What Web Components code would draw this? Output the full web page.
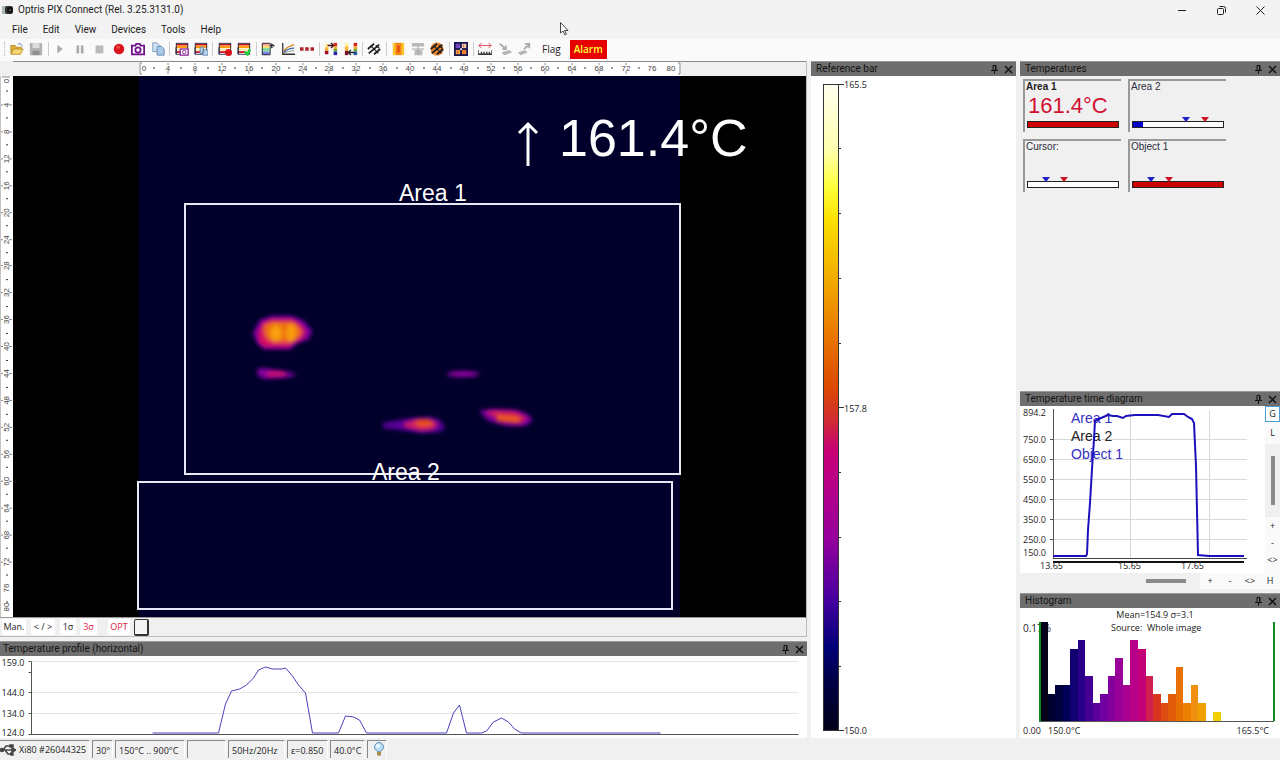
<!DOCTYPE html>
<html lang="en">
<head>
<meta charset="utf-8">
<title>Optris PIX Connect</title>
<style>
  html, body { margin: 0; height: 100%; }
  body { --ui: Roboto, "Open Sans", sans-serif; font: 10px/14px "Open Sans", "Noto Sans", sans-serif; color: #1c1c1c; background: #f0f0f0; overflow: hidden; }
</style>
</head>
<body>
<pix-app></pix-app>
<script>
const base = `*{box-sizing:border-box} button{font:inherit;color:inherit;border:0;background:none;padding:0;margin:0;display:grid;place-items:center;cursor:default} svg{display:block;flex:none}`;
function define(name, html, init) {
  const t = document.createElement('template');
  t.innerHTML = html;
  customElements.define(name, class extends HTMLElement {
    constructor() {
      super();
      const root = this.attachShadow({ mode: 'open' });
      root.append(t.content.cloneNode(true));
    }
    connectedCallback() { if (init) init(this.shadowRoot, this); }
  });
}

/* ---------- title bar ---------- */
define('title-bar', `<style>${base}
:host{display:flex;align-items:center;height:20px;background:#f3f3f3;font-family:var(--ui)}
.logo{margin-left:2px} h1{font:inherit;margin:0 0 0 4px;flex:1;color:#222}
button{width:39px;height:20px}
</style>
<svg class="logo" width="12" height="10" viewBox="0 0 12 10"><rect x="0" y="1" width="6" height="8" fill="#a9bbb5"/><rect x="3" y="1" width="8" height="8" rx="2" fill="#333"/><circle cx="8" cy="5" r="3" fill="#111"/><circle cx="8" cy="5" r="1" fill="#567"/></svg>
<h1>Optris PIX Connect (Rel. 3.25.3131.0)</h1>
<button aria-label="Minimize"><svg width="9" height="9" viewBox="0 0 9 9"><path d="M0 4.5h8" stroke="#222"/></svg></button>
<button aria-label="Restore"><svg width="9" height="9" viewBox="0 0 9 9" fill="none" stroke="#222"><rect x=".5" y="2.500" width="6" height="6" rx="1"/><path d="M2.500 .5h4a2 2 0 0 1 2 2v4"/></svg></button>
<button aria-label="Close"><svg width="9" height="9" viewBox="0 0 9 9"><path d="M.5 .5l8 8M8.500 .5l-8 8" stroke="#222"/></svg></button>`);

/* ---------- menu ---------- */
define('menu-bar', `<style>${base}
:host{display:block;background:#f3f3f3;height:19px;font-family:var(--ui)}
nav{display:flex;gap:15px;padding:3px 12px 2px}
</style><nav><button>File</button><button>Edit</button><button>View</button><button>Devices</button><button>Tools</button><button>Help</button></nav>`);

/* ---------- toolbar ---------- */
const stripes = `<rect x="1" y="1" width="14" height="13" fill="#fff"/><path d="M1 3h14" stroke="#c8102a" stroke-width="2"/><path d="M1 5.500h14" stroke="#ff9c10" stroke-width="3"/><path d="M1 9h14" stroke="#ffe9a0" stroke-width="2"/><path d="M1 11.500h9" stroke="#c8102a" stroke-width="2"/><path d="M1 6v8" stroke="#223"/><rect x="1.500" y="1.500" width="13" height="12.500" fill="none" stroke="#22284a"/>`;
const chain = `<path d="M1 8l7-6M2 13l12-10M8 14l7-6" stroke="#1c1c1c" stroke-width="2"/><path d="M5 5l8 8M10 4l4 3" stroke="#1c1c1c" stroke-width="1.500"/>`;
const icons = {
  Open: `<path d="M1 13V4h5l1 2h6v3" fill="#e0b040" stroke="#b98a20"/><path d="M1 14l3-6h11l-3 6z" fill="#f6d876" stroke="#b98a20"/><path d="M9 3c2-2 4-1 5 2" stroke="#469" fill="none"/>`,
  Save: `<path d="M1 1h13l1 1v13H1z" fill="#b0b0b0"/><rect x="4" y="1" width="8" height="6" fill="#ddd"/><rect x="4" y="10" width="8" height="5" fill="#8e8e8e"/>`,
  Play: `<path d="M5 3l6 5-6 5z" fill="#aaa"/>`,
  Pause: `<path d="M4 4h3v9H4zM9 4h3v9H9z" fill="#aaa"/>`,
  Stop: `<rect x="4" y="4" width="9" height="9" fill="#bbb"/>`,
  Record: `<circle cx="8" cy="8" r="6" fill="#d9141c"/><circle cx="7" cy="6" r="2" fill="#f0504c"/>`,
  Snapshot: `<path d="M1 4h4l1-2h4l1 2h4v10H1z" fill="#fff" stroke="#70108c" stroke-width="2"/><circle cx="8" cy="9" r="3" fill="none" stroke="#70108c" stroke-width="2"/>`,
  Copy: `<path d="M2 1h5l3 3v7H2z" fill="#cfe2f4" stroke="#7695b8"/><path d="M7 5h5l3 3v7H7z" fill="#a9cbea" stroke="#6685ad"/>`,
  'Snapshot palette': `${stripes}<rect x="6" y="8" width="9" height="7" fill="#fff" stroke="#90289c" stroke-width="1.500"/><circle cx="10.500" cy="11.500" r="2" fill="none" stroke="#90289c"/>`,
  'Copy palette': `${stripes}<path d="M7 6h4v7H7zM10 9h6v6h-6z" fill="#b6d3ee" stroke="#6685ad"/>`,
  'Record palette': `${stripes}<circle cx="12" cy="12" r="4" fill="#d9141c"/>`,
  'Play palette': `${stripes}<path d="M9 11l3 3 3-6" stroke="#1fd038" fill="none" stroke-width="3"/>`,
  Layout: `<path d="M1 1h9v4H1z" fill="#f4a0a8"/><path d="M1 4h9v3H1z" fill="#f8e070"/><path d="M1 7h9v4H1z" fill="#80d8a0"/><path d="M1 11h9v4H1z" fill="#8080e8"/><path d="M1.500 1.500h9v13h-9zM10 4h5M12 2l3 2-3 3z" stroke="#222" fill="none"/>`,
  Curves: `<path d="M2 1v13h14" stroke="#333" fill="none" stroke-width="1.500"/><path d="M3 11c3-6 7-6 12-8" stroke="#d98a20" fill="none" stroke-width="1.500"/><path d="M3 12c4-4 7-5 12-5" stroke="#36a" fill="none" stroke-width="1.500"/><path d="M3 13c4-2 7-3 12-3" stroke="#888" fill="none"/>`,
  Dots: `<path d="M0 6h4v4H0zM6 6h4v4H6zM12 6h4v4h-4z" fill="#b3202a"/>`,
  'Range up': `<path d="M1 2h4v4H1z" fill="#fff3a0"/><path d="M1 6h4v4H1z" fill="#fbb733"/><path d="M1 10h4v4H1z" fill="#912"/><path d="M11 1h4v4h-4z" fill="#d22"/><path d="M11 5h4v3h-4z" fill="#ea3"/><path d="M11 8h4v3h-4z" fill="#6a3"/><path d="M11 11h4v4h-4z" fill="#22a"/><path d="M4 4h7M8 1l3 3-3 3" stroke="#411" fill="none" stroke-width="1.500"/>`,
  'Range down': `<path d="M1 1h4v4H1z" fill="#fff3a0"/><path d="M1 5h4v5H1z" fill="#fbb733"/><path d="M1 10h4v5H1z" fill="#712"/><path d="M11 1h4v4h-4z" fill="#d22"/><path d="M11 5h4v3h-4z" fill="#ea3"/><path d="M11 8h4v3h-4z" fill="#6a3"/><path d="M11 11h4v4h-4z" fill="#25a"/><path d="M5 12h7M8 9l-3 3 3 3" stroke="#222" fill="none" stroke-width="1.500"/>`,
  Settings: chain,
  Palette: `<rect x="2" y="1" width="13" height="14" fill="#fbc42c"/><rect x="5" y="1" width="7" height="14" fill="#f58a18"/><rect x="7" y="4" width="3" height="8" fill="#e8500c"/>`,
  Align: `<path d="M1 1h14v4H1zM4 9h9v6H4z" fill="#bbb"/><path d="M8 5v9M1 8h14" stroke="#999"/>`,
  Calibrate: `<circle cx="8" cy="8" r="7.500" fill="#e8862c"/>${chain}`,
  Zones: `<rect x="0" y="0" width="16" height="16" fill="#1a1450"/><path d="M2 2h5v5H2z" fill="#7048c0"/><path d="M9 9h5v5H9z" fill="#f08030"/><path d="M9 2h5v5H9z" fill="#f6d0a0"/><path d="M2 9h5v5H2z" fill="#f3a33a"/><path d="M7 7h2v2H7z" fill="#fff"/><path d="M11 3v3M4 10v3" stroke="#c04060"/>`,
  Measure: `<path d="M1 4h14M4 1L1 4l3 3M12 1l3 3-3 3" stroke="#d8404c" fill="none"/><path d="M0 9v5h16V9M4 11v3M7 11v3M10 11v3M13 11v3" stroke="#333" fill="none" stroke-width="1.500"/>`,
  Import: `<path d="M2 2l7 6M9 4v4H5" stroke="#aaa" fill="none" stroke-width="2"/><path d="M4 12l9-3 3 3-9 3z" fill="#b5b5b5"/>`,
  Export: `<path d="M8 8l6-5M9 2h5v5" stroke="#aaa" fill="none" stroke-width="2"/><path d="M1 12l8-3 3 3-8 3z" fill="#b5b5b5"/>`
};
define('tool-bar', `<style>${base}
:host{display:flex;align-items:center;height:22px;background:#fafafa;padding:0 0 2px 4px}
.grip{width:2px;height:14px;border-left:1px dotted #bbb}
.tools{display:flex;align-items:center;justify-content:space-between;width:523px;margin-left:3px}
.tools i{width:1px;height:14px;background:#ccc}
.flag{margin-left:10px}
.alarm{margin-left:9px;width:37px;height:19px;background:#e60000;color:#ff3;font-weight:600}
.tools button{width:16px;height:16px}
</style><span class="grip"></span><div class="tools"></div><button class="flag">Flag</button><button class="alarm">Alarm</button>`, root => {
  const after = new Set(['Save', 'Copy', 'Copy palette', 'Play palette', 'Dots', 'Range down', 'Settings', 'Calibrate', 'Zones']);
  root.querySelector('.tools').innerHTML = Object.entries(icons).map(([n, d]) =>
    `<button aria-label="${n}" title="${n}"><svg width="14" height="14" viewBox="0 0 16 16" fill="none">${d}</svg></button>${after.has(n) ? '<i></i>' : ''}`).join('');
});

/* ---------- dockable panel ---------- */
define('dock-panel', `<style>${base}
:host{display:flex;flex-direction:column;min-width:0;min-height:0;background:#fff}
header{display:flex;align-items:center;height:15px;background:#6e6e6e;border-top:1px solid #999;padding:0 1px 0 5px;color:#141414;font-family:var(--ui)}
:host([flush]) header{padding-left:3px}
h2{font:inherit;flex:1;margin:0}
button{width:14px;height:14px}
.body{flex:1;min-height:0;display:flex;flex-direction:column}
</style>
<header><h2></h2>
<button aria-label="Pin"><svg width="7" height="9" viewBox="0 0 7 9"><path d="M2 .5h3v5H2zM0 5.500h7M3.500 6v3M4.500 1v4" fill="none" stroke="#111"/></svg></button>
<button aria-label="Close panel"><svg width="9" height="9" viewBox="0 0 9 9"><path d="M1 1l7 7M8 1l-7 7" stroke="#111" stroke-width="1.500"/></svg></button>
</header><div class="body"><slot></slot></div>`, (root, el) => { root.querySelector('h2').textContent = el.getAttribute('label'); });

/* ---------- rulers ---------- */
define('scale-ruler', `<style>${base}
:host{display:block;background:#fff;overflow:hidden}
svg{width:100%;height:100%} text{font:8px "Liberation Sans",sans-serif;fill:#444}
path{fill:none;stroke:#888}
</style><svg></svg>`, (root, el) => {
  const vertical = el.hasAttribute('vertical');
  const length = 542;
  const at = v => v === 0 ? 5 : v === 80 ? length - 10 : 2 + Math.round(v * 6.73);
  const svg = root.querySelector('svg');
  let s = '';
  for (let v = 0; v <= 80; v += 4) {
    const p = at(v), dot = 2 + Math.round((v + 2) * 6.73);
    const line = v > 0 && v < 76;
    s += vertical
      ? `${line ? `<path d="M1 ${p}h2M9 ${p}h3"/>` : ''}<text transform="translate(9 ${p}) rotate(-90)" text-anchor="middle">${v}</text>${v < 78 ? `<path d="M6 ${dot}h2" style="stroke:#333"/>` : ''}`
      : `${line ? `<path d="M${p} 1v2M${p} 9v3"/>` : ''}<text x="${p}" y="9" text-anchor="middle">${v}</text>${v < 76 ? `<path d="M${dot} 5v2" style="stroke:#333"/>` : ''}`;
  }
  s += vertical ? `<path d="M0 0v${length}M10 1H2"/>` : `<path d="M3 1H1v11h2M${length - 3} 1h2v11h-2"/>`;
  svg.setAttribute('viewBox', vertical ? `0 0 13 ${length}` : `0 0 ${length} 14`);
  svg.innerHTML = s;
});

/* ---------- thermal image ---------- */
define('thermal-view', `<style>${base}
:host{display:grid;grid-template:15px minmax(0,1fr)/13px minmax(0,1fr);min-height:0;background:#f0f0f0;border-right:1px solid #bbb}
.top{grid-column:2;display:flex;justify-content:center;border-top:1px solid #8a8a8a}
.top scale-ruler{width:542px;height:14px}
.image{background:#000;min-width:0;min-height:0}
.image svg{width:100%;height:100%}
.area{fill:none;stroke:#e8e8f4;stroke-width:2}
text{font-family:"Liberation Sans",sans-serif;fill:#fff}
.name{font-size:23px}.big{font-size:52px}
</style>
<div class="top"><scale-ruler></scale-ruler></div>
<scale-ruler vertical></scale-ruler>
<div class="image"><svg viewBox="0 0 793 541" role="img" aria-label="Thermal image">
<defs><filter id="b1" x="-50%" y="-50%" width="200%" height="200%"><feGaussianBlur stdDeviation="2"/></filter>
<filter id="b2" x="-50%" y="-50%" width="200%" height="200%"><feGaussianBlur stdDeviation="2"/></filter></defs>
<rect x="126" width="541" height="541" fill="#00002b"/>
<g filter="url(#b1)">
<path d="M240 257l7-13 12-4h20l12 5 8 10-3 8-12 4-6 6h-27l-7-6z" fill="#8000a4"/>
<path d="M244 293l6-1 12 2 14 2 8 3-8 2-24 2-7-3z" fill="#8400a0"/>
<ellipse cx="450" cy="298" rx="16" ry="3" fill="#9400a4"/>
<path d="M370 347l22-4 26-2 9 3 5 7-5 5-18 1-22-3-17-2z" fill="#5a0098"/>
<path d="M466 335l14-2 24 1 10 4 6 6-8 6-18 0-18-5z" fill="#8400a0"/>
</g>
<g filter="url(#b2)">
<path d="M245 256l5-10 9-3h20l9 5 5 7-3 8-8 3-6 5h-25l-5-5z" fill="#d41060"/>
<path d="M250 250l8-4h22l6 5 3 5-3 5-6 5h-20l-7-4z" fill="#ee6c08"/>
<ellipse cx="263" cy="257" rx="6" ry="8" fill="#f8a00c"/><ellipse cx="278" cy="257" rx="5" ry="9" fill="#f89c10"/>
<path d="M254 298h18" stroke="#d81460" stroke-width="4"/>
<path d="M390 347l14-4h12l9 4-3 6-14 2-16-4z" fill="#d01c68"/>
<ellipse cx="411" cy="347" rx="9" ry="4" fill="#e85018"/>
<path d="M472 336l10-1 20 1 12 6-6 5-15-1z" fill="#d82450"/>
<path d="M484 342l22 2" stroke="#ec5c14" stroke-width="6"/>
</g>
<rect class="area" x="172" y="128" width="495" height="270"/>
<rect class="area" x="125" y="406" width="534" height="127"/>
<text class="name" x="386" y="125">Area 1</text><text class="name" x="359" y="404">Area 2</text>
<path d="M515 90V48M506 57l9-9 9 9" fill="none" stroke="#fff" stroke-width="3"/>
<text class="big" x="546" y="80">161.4°C</text>
</svg></div>`);

define('range-bar', `<style>${base}
:host{display:flex;align-items:center;height:20px;background:#f0f0f0;border:1px solid #bbb;border-top:1px solid #999;border-left:0;padding-left:2px}
button{height:16px;background:#fff;border-radius:2px;font-size:9px}
.hot{color:#e02040}
.a{width:24px}.b{width:24px;margin-left:5px}.c{width:16px;margin-left:5px}.d{width:17px;margin-left:4px}.e{width:22px;margin:0 4px 0 11px}
input{appearance:none;flex:1;height:18px;margin:0;background:transparent;min-width:0}
input::-webkit-slider-thumb{appearance:none;width:15px;height:17px;background:#f4f4f4;border:1px solid #333;border-right-width:2px;border-bottom-width:2px;border-radius:2px}
</style><button class="a">Man.</button><button class="b">&lt; / &gt;</button><button class="c">1σ</button><button class="d hot">3σ</button><button class="e hot">OPT</button><input type="range" value="0" aria-label="Temperature range">`);

/* ---------- profile ---------- */
define('profile-chart', `<style>${base}
:host{display:block;flex:1;min-height:0} svg{width:100%;height:100%} text{fill:#222;font-size:9px}
</style><svg viewBox="0 0 806 82" role="img" aria-label="Temperature profile">
<path d="M32 5.500h766M32 36.500h766M32 57.500h766" stroke="#e4e4e4"/>
<path d="M28 5.500h3v73M28 16.500h3M28 36.500h3M28 57.500h3M28 78.500h770" fill="none" stroke="#555"/>
<g><text x="1" y="10">159.0</text><text x="1" y="40">144.0</text><text x="1" y="61">134.0</text><text x="1" y="80">124.0</text></g>
<path d="M152 77h66l7-29 6-13 8-2 7-4 7-7 5-8 7-3 7 2h9l4-1 7 8 6 9 7 8 7 40h26l7-17 8 1 6 3 7 13h80l7-20 6-8 7 28h15l5-2 7-9 8-4 7 4 6 7 7 4h139" fill="none" stroke="#4a42bc"/>
</svg>`);

/* ---------- reference bar ---------- */
define('reference-scale', `<style>${base}
:host{display:block;flex:1;min-height:0} svg{width:100%;height:100%} text{fill:#222;font-size:9px}
</style><svg viewBox="0 0 205 662" preserveAspectRatio="xMinYMid meet" role="img" aria-label="Reference bar">
<defs><linearGradient id="iron" x2="0" y2="1"><stop stop-color="#fffff0"/><stop offset=".1" stop-color="#ffffb0"/><stop offset=".16" stop-color="#ffff38"/><stop offset=".21" stop-color="#fbe000"/><stop offset=".32" stop-color="#f0a000"/><stop offset=".4" stop-color="#e87000"/><stop offset=".47" stop-color="#dc4800"/><stop offset=".52" stop-color="#d02c34"/><stop offset=".565" stop-color="#c80074"/><stop offset=".62" stop-color="#b80088"/><stop offset=".7" stop-color="#98009c"/><stop offset=".8" stop-color="#4400a0"/><stop offset=".87" stop-color="#000078"/><stop offset=".92" stop-color="#000048"/><stop offset="1" stop-color="#000018"/></linearGradient></defs>
<rect x="12.500" y="8.500" width="15" height="646" fill="url(#iron)" stroke="#333"/>
<path d="M28 8.500h5M28 72.500h2M28 137.500h2M28 202.500h2M28 267.500h2M28 331.500h5M28 396.500h2M28 461.500h2M28 525.500h2M28 590.500h2M28 654.500h5" stroke="#333"/>
<text x="33" y="12">165.5</text><text x="33" y="336">157.8</text><text x="33" y="658">150.0</text>
</svg>`);

/* ---------- temperature read-outs ---------- */
define('temp-card', `<style>${base}
:host{display:flex;flex-direction:column;width:98px;height:53px;border:2px solid #999;border-right-width:0;border-bottom-width:0;padding:0 2px 0 1px;font:10px/12px "Liberation Sans",sans-serif;color:#2c2c3c}
:host([value]) .n{font-weight:700;color:#222}
.v{font-size:22px;line-height:26px;height:28px;color:#d01030;padding-left:2px}
.bar{height:7px;border:1px solid #222;background:#fff;width:92px;margin-left:1px;position:relative}
.fill{height:5px}
.bar b{position:absolute;top:-5px;border:4px solid transparent;border-top:5px solid #2020c8;border-bottom:0}
.bar b+b{border-top-color:#d01020}
</style><span class="n"></span><span class="v"></span><div class="bar"><div class="fill"></div></div>`, (root, el) => {
  const g = n => el.getAttribute(n);
  root.querySelector('.n').textContent = g('name');
  root.querySelector('.v').textContent = g('value') || '';
  const f = root.querySelector('.fill');
  f.style.width = (g('fill') || 0) + '%';
  f.style.background = +g('fill') === 100 ? '#cc0000' : '#0000c8';
  if (g('marks')) for (const m of g('marks').split(',')) {
    const b = document.createElement('b'); b.style.left = m + '%'; root.querySelector('.bar').append(b);
  }
});
define('temp-grid', `<style>${base}
:host{display:block;flex:1;background:#f0f0f0}
.g{display:flex;flex-wrap:wrap;gap:7px;padding:3px 30px 0 3px}
</style><div class="g">
<temp-card name="Area 1" value="161.4°C" fill="100"></temp-card><temp-card name="Area 2" fill="11" marks="54,75"></temp-card>
<temp-card name="Cursor:" marks="15,35"></temp-card><temp-card name="Object 1" fill="100" marks="15,35"></temp-card></div>`);

/* ---------- time diagram ---------- */
define('time-diagram', `<style>${base}
:host{display:grid;grid-template:minmax(0,1fr) 16px/minmax(0,1fr) 15px;flex:1;min-height:0}
.plot svg{width:100%;height:100%} text{fill:#222;font-size:9px}
.plot{min-height:0}
.leg text{font:14px "Liberation Sans",sans-serif}
.side{display:flex;flex-direction:column;align-items:stretch;background:#fafafa;font-size:9px;padding:0 0 5px}
.side button{height:17px}
.side .on{background:#fff;border:1px solid #4a9fd8;height:16px}
.side .l{height:22px}
.track{flex:1;display:grid;justify-items:center;padding:12px 0;background:#f0f0f0}
.track span{width:4px;background:#8a8a8a}
.foot{display:flex;grid-column:1/3;background:#fafafa;font-size:9px}
.foot button{width:20px}
.foot .h{flex:1;display:flex;align-items:center;justify-content:flex-end;background:#f0f0f0;padding-right:14px}
.foot .h span{height:4px;width:40px;background:#8a8a8a}
</style>
<div class="plot"><svg viewBox="0 0 245 167" role="img" aria-label="Temperature over time">
<path d="M32 33.500h195M32 53.500h195M32 73.500h195M32 93.500h195M32 113.500h195M32 133.500h195M110.500 4v148M189.500 4v148" stroke="#d8d8d8"/>
<path d="M33.500 3v150M30 33.500h3M30 53.500h3M30 73.500h3M30 93.500h3M30 113.500h3M30 133.500h3" stroke="#555" fill="none"/>
<path d="M33 152.500h194" stroke="#444"/><path d="M33 156h191" stroke="#111" stroke-width="2"/>
<g><text x="3" y="10">894.2</text><text x="3" y="37">750.0</text><text x="3" y="57">650.0</text><text x="3" y="77">550.0</text><text x="3" y="97">450.0</text><text x="3" y="117">350.0</text><text x="3" y="137">250.0</text><text x="3" y="150">150.0</text>
<text x="20" y="163">13.65</text><text x="98" y="163">15.65</text><text x="161" y="163">17.65</text></g>
<g class="leg"><text x="51" y="17" style="fill:#3430c0">Area 1</text><text x="51" y="35">Area 2</text><text x="51" y="53" style="fill:#3430c0">Object 1</text></g>
<path d="M33 150H66L67 148 68 124 70 97 72 63 74 33 75 15 81 12 88 9 93 10 97 10 103 12 106 10 115 9H138L149 11 152 8H164L168 11 172 13 174 17 176 60 178 149 189 150 224 150" fill="none" stroke="#1c10bc" stroke-width="2"/>
</svg></div>
<div class="side"><button class="on">G</button><button class="l">L</button><div class="track"><span></span></div><button>+</button><button>-</button><button>&lt;&gt;</button></div>
<div class="foot"><div class="h"><span></span></div><button>+</button><button>-</button><button>&lt;&gt;</button><button>H</button></div>`);

/* ---------- histogram ---------- */
define('histogram-chart', `<style>${base}
:host{display:block;flex:1;min-height:0} svg{width:100%;height:100%} text{fill:#222;font-size:9px}
.peak{font-size:10px}
</style><svg viewBox="0 0 260 130" role="img" aria-label="Histogram">
<text class="peak" x="3" y="24">0.17%</text><g class="bars"></g>
<path d="M19 113.500h235" stroke="#555"/><path d="M20 14v99M254 14v99" stroke="#0c8c20" stroke-width="2"/>
<text x="135" y="10" text-anchor="middle">Mean=154.9 σ=3.1</text><text x="91" y="23" xml:space="preserve">Source:  Whole image</text>
<text x="3" y="126">0.00</text><text x="28" y="126">150.0°C</text><text x="249" y="126" text-anchor="end">165.5°C</text></svg>`, root => {
  const counts = [11, 3, 4, 4, 8, 9, 5, 2, 3, 5, 7, 4, 9, 8, 5, 3, 2, 3, 6, 2, 4, 2, 0, 1];
  const colors = '#000018 #00002c #00003c #000058 #100070 #280088 #440094 #5c009c #7000a0 #84009c #980098 #a80090 #b80088 #c40078 #d02050 #d83420 #dc4c10 #e05c08 #e87000 #ec8000 #f09010 #f0a000 #f0b800 #f0d000'.split(' ');
  const edge = i => 20 + Math.round(i * 7.54);
  root.querySelector('.bars').innerHTML = counts.map((c, i) => `<rect x="${edge(i)}" y="${113 - c * 9}" width="${edge(i + 1) - edge(i)}" height="${c * 9}" fill="${colors[i]}"/>`).join('');
});

/* ---------- status bar ---------- */
define('status-bar', `<style>${base}
:host{display:flex;gap:2px;height:22px;padding:2px 0 2px;background:#f0f0f0;font-size:9px}
span{border-right:1px solid #fff;border-left:1px solid #888;border-top:1px solid #888;height:18px;line-height:19px;padding-left:3px;white-space:nowrap}
.dev{display:flex;align-items:center;gap:3px;padding-left:0;border-left:0}
</style>
<span class="dev" style="width:90px"><svg width="16" height="14" viewBox="0 0 16 14" fill="none" stroke="#444" stroke-width="1.500"><path d="M0 7h13M3 7l3-4h4M5 7l3 4h3"/><path d="M12 5l4 2-4 2z" fill="#444"/><circle cx="2" cy="7" r="1.500" fill="#444"/><path d="M10 2h3v2h-3zM11 10h2v2h-2z" fill="#444"/></svg>Xi80 #26044325</span>
<span style="width:21px">30°</span><span style="width:70px">150°C .. 900°C</span><span style="width:39px"></span><span style="width:57px">50Hz/20Hz</span><span style="width:41px">ε=0.850</span><span style="width:35px">40.0°C</span>
<span style="width:20px"><svg width="14" height="16" viewBox="0 0 14 16"><circle cx="8" cy="6" r="4.500" fill="#b8dcf4" stroke="#6a93b4"/><circle cx="7" cy="5" r="2" fill="#eefaff"/><path d="M6 11h4v3l-2 1-2-1z" fill="#a98c50"/></svg></span>`);

/* ---------- application ---------- */
define('pix-app', `<style>${base}
:host{display:flex;flex-direction:column;height:100vh;min-height:600px;position:relative}
main{flex:1;display:grid;grid-template-columns:minmax(0,1fr) 205px 260px;gap:4px;min-height:0}
.left,.right{display:flex;flex-direction:column;min-height:0;gap:4px}
.view{flex:1;display:flex;flex-direction:column;min-height:0}
thermal-view{flex:1}
.profile{height:97px}.temps{flex:1}.time{height:198px}.histo{height:145px}
.cursor{position:absolute;left:560px;top:22px}
</style>
<title-bar></title-bar><menu-bar></menu-bar><tool-bar></tool-bar>
<main>
<section class="left"><div class="view"><thermal-view></thermal-view><range-bar></range-bar></div>
<dock-panel flush class="profile" label="Temperature profile (horizontal)"><profile-chart></profile-chart></dock-panel></section>
<dock-panel label="Reference bar"><reference-scale></reference-scale></dock-panel>
<section class="right"><dock-panel class="temps" label="Temperatures"><temp-grid></temp-grid></dock-panel>
<dock-panel class="time" label="Temperature time diagram"><time-diagram></time-diagram></dock-panel>
<dock-panel class="histo" label="Histogram"><histogram-chart></histogram-chart></dock-panel></section>
</main>
<status-bar></status-bar>
<svg class="cursor" width="9" height="14" viewBox="0 0 9 14"><path d="M.5 .5v10.500l2.500-2 2 4 1.500-1-2-3.500h3.500z" fill="#fff" stroke="#444"/></svg>`);
</script>
</body>
</html>
